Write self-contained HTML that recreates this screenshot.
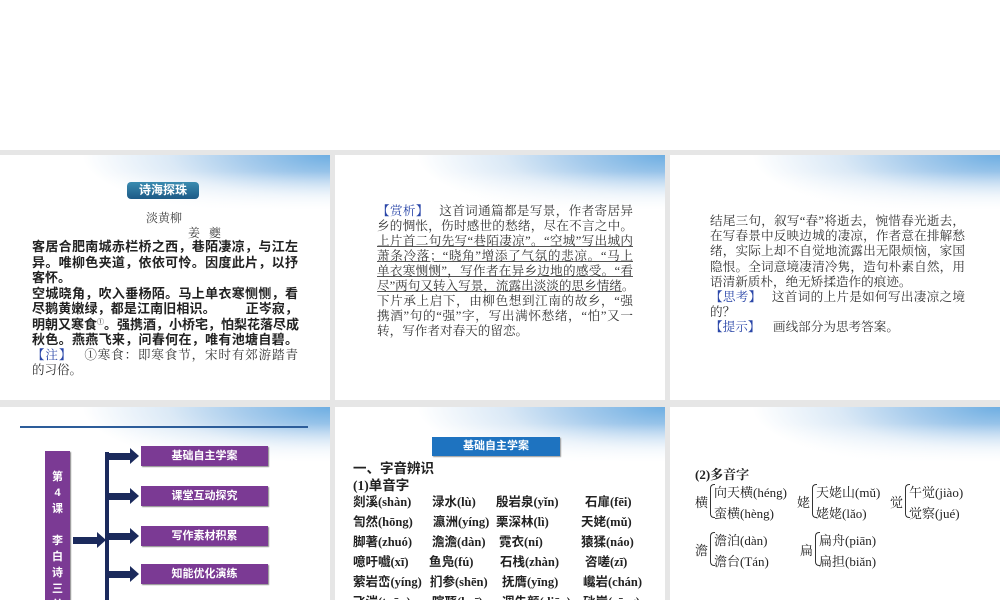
<!DOCTYPE html>
<html><head><meta charset="utf-8"><style>
*{margin:0;padding:0;box-sizing:border-box}
body{width:1000px;height:600px;background:#fff;position:relative;overflow:hidden;font-family:"Liberation Serif","Noto Serif CJK SC","Noto Sans CJK SC",serif;color:#222}
.bg{position:absolute;left:0;top:150px;width:1000px;height:450px;background:#e6e6e6}
.s{position:absolute;background:#fff;overflow:hidden}
.hd{position:absolute;left:0;top:0;width:100%;height:55px;background:linear-gradient(180deg,rgba(255,255,255,0) 0%,rgba(255,255,255,0) 30%,#fff 100%),radial-gradient(ellipse 75% 120% at 100% 0%,#6eaee2 0%,#a6cbec 35%,#dbe9f6 65%,rgba(255,255,255,0) 100%)}
.a{position:absolute;white-space:nowrap}
.bl{color:#2a46a8}
.u{text-decoration:underline;text-decoration-color:#555}
.L div{text-align:justify;text-align-last:justify;white-space:nowrap}
.L div.e{text-align-last:left}
.pb{position:absolute;background:#7b3a94;color:#fff;font-family:"Liberation Sans","Noto Sans CJK SC",sans-serif;font-weight:bold;font-size:11px;text-align:center;line-height:20px;box-shadow:1px 1px 1px #888}
.ar{position:absolute;height:7px;background:#1b2a5c}
.ar:after{content:"";position:absolute;right:-8px;top:-5px;border-left:9px solid #1b2a5c;border-top:8px solid transparent;border-bottom:8px solid transparent}
.p5{font-size:12.5px;font-weight:bold;font-family:"Liberation Serif","Noto Sans CJK SC",serif}
.p6{font-size:13px;font-family:"Liberation Serif","Noto Serif CJK SC",serif}
.br{position:absolute;width:5px;border:1px solid #333;border-right:none;border-radius:4px 0 0 4px}
.sp{font-size:7px;font-weight:normal;line-height:0;position:relative;top:-5px}
</style></head><body>
<div class="bg"></div>

<!-- slide 1 -->
<div class="s" style="left:0;top:155px;width:330px;height:245px">
<div class="hd"></div>
<div class="a" style="left:127px;top:27px;width:72px;height:17px;border-radius:4px;background:linear-gradient(#3a8bb0,#1d5a86);color:#fff;font-family:'Liberation Sans','Noto Sans CJK SC',sans-serif;font-weight:bold;font-size:12px;text-align:center;line-height:17px">诗海探珠</div>
<div class="a" style="left:146px;top:54px;font-size:12px;color:#444">淡黄柳</div>
<div class="a" style="left:188px;top:69px;font-size:12px;color:#444">姜&nbsp;&nbsp;&nbsp;夔</div>
<div class="a L" style="left:32px;top:84px;width:266px;font-size:13px;font-weight:bold;line-height:15.5px;font-family:'Liberation Sans','Noto Sans CJK SC',sans-serif">
<div>客居合肥南城赤栏桥之西，巷陌凄凉，与江左</div>
<div>异。唯柳色夹道，依依可怜。因度此片，以抒</div>
<div class="e">客怀。</div>
<div>空城晓角，吹入垂杨陌。马上单衣寒恻恻，看</div>
<div>尽鹅黄嫩绿，都是江南旧相识。&nbsp;&nbsp;&nbsp;&nbsp;&nbsp;&nbsp;&nbsp;&nbsp;正岑寂，</div>
<div>明朝又寒食<span class="sp">①</span>。强携酒，小桥宅，怕梨花落尽成</div>
<div>秋色。燕燕飞来，问春何在，唯有池塘自碧。</div>
</div>
<div class="a L" style="left:32px;top:193px;width:266px;font-size:12.5px;line-height:15px;color:#333">
<div><span class="bl">【注】</span>&nbsp;&nbsp;&nbsp;①寒食：即寒食节，宋时有郊游踏青</div>
<div class="e">的习俗。</div>
</div>
</div>

<!-- slide 2 -->
<div class="s" style="left:335px;top:155px;width:330px;height:245px">
<div class="hd"></div>
<div class="a L" style="left:42px;top:49px;width:256px;font-size:12.6px;line-height:15px;color:#333">
<div><span class="bl">【赏析】</span>&nbsp;&nbsp;&nbsp;这首词通篇都是写景，作者寄居异</div>
<div>乡的惆怅，伤时感世的愁绪，尽在不言之中。</div>
<div class="u">上片首二句先写“巷陌凄凉”。“空城”写出城内</div>
<div class="u">萧条冷落；“晓角”增添了气氛的悲凉。“马上</div>
<div class="u">单衣寒恻恻”，写作者在异乡边地的感受。“看</div>
<div><span class="u">尽”两句又转入写景，流露出淡淡的思乡情绪</span>。</div>
<div>下片承上启下，由柳色想到江南的故乡，“强</div>
<div>携酒”句的“强”字，写出满怀愁绪，“怕”又一</div>
<div class="e">转，写作者对春天的留恋。</div>
</div>
</div>

<!-- slide 3 -->
<div class="s" style="left:670px;top:155px;width:330px;height:245px">
<div class="hd"></div>
<div class="a L" style="left:40px;top:59px;width:255px;font-size:12.6px;line-height:15.2px;color:#333">
<div>结尾三句，叙写“春”将逝去，惋惜春光逝去，</div>
<div>在写春景中反映边城的凄凉，作者意在排解愁</div>
<div>绪，实际上却不自觉地流露出无限烦恼，家国</div>
<div>隐恨。全词意境凄清冷隽，造句朴素自然，用</div>
<div class="e">语清新质朴，绝无矫揉造作的痕迹。</div>
<div><span class="bl">【思考】</span>&nbsp;&nbsp;&nbsp;这首词的上片是如何写出凄凉之境</div>
<div class="e">的？</div>
<div class="e"><span class="bl">【提示】</span>&nbsp;&nbsp;&nbsp;&nbsp;画线部分为思考答案。</div>
</div>
</div>

<!-- slide 4 -->
<div class="s" style="left:0;top:407px;width:330px;height:193px">
<div class="hd"></div>
<div class="a" style="left:20px;top:19px;width:288px;height:2px;background:#2d5d9a"></div>
<div class="pb" style="left:45px;top:44px;width:25px;height:160px;line-height:16px;padding-top:18px;font-size:11px">第<br>4<br>课<br><br>李<br>白<br>诗<br>三<br>首</div>
<div class="ar" style="left:73px;top:130px;width:25px"></div>
<div class="a" style="left:105px;top:45px;width:4px;height:150px;background:#1b2a5c"></div>
<div class="ar" style="left:107px;top:46px;width:24px"></div>
<div class="ar" style="left:107px;top:86px;width:24px"></div>
<div class="ar" style="left:107px;top:126px;width:24px"></div>
<div class="ar" style="left:107px;top:164px;width:24px"></div>
<div class="pb" style="left:141px;top:39px;width:127px;height:20px">基础自主学案</div>
<div class="pb" style="left:141px;top:79px;width:127px;height:20px">课堂互动探究</div>
<div class="pb" style="left:141px;top:119px;width:127px;height:20px">写作素材积累</div>
<div class="pb" style="left:141px;top:157px;width:127px;height:20px">知能优化演练</div>
</div>

<!-- slide 5 -->
<div class="s" style="left:335px;top:407px;width:330px;height:193px">
<div class="hd"></div>
<div class="a" style="left:97px;top:30px;width:128px;height:19px;background:#1e73c0;color:#fff;font-family:'Liberation Sans','Noto Sans CJK SC',sans-serif;font-weight:bold;font-size:11px;text-align:center;line-height:19px;box-shadow:1px 1px 1px #999">基础自主学案</div>
<div class="a p5" style="left:18px;top:50px;font-size:13.5px">一、字音辨识</div>
<div class="a p5" style="left:18px;top:67px;font-size:13.5px">(1)单音字</div>
<div class="a p5" style="left:18px;top:84px">剡溪(shàn)</div><div class="a p5" style="left:97px;top:84px">渌水(lù)</div><div class="a p5" style="left:161px;top:84px">殷岩泉(yǐn)</div><div class="a p5" style="left:250px;top:84px">石扉(fēi)</div>
<div class="a p5" style="left:18px;top:104px">訇然(hōng)</div><div class="a p5" style="left:98px;top:104px">瀛洲(yíng)</div><div class="a p5" style="left:161px;top:104px">栗深林(lì)</div><div class="a p5" style="left:246px;top:104px">天姥(mǔ)</div>
<div class="a p5" style="left:18px;top:124px">脚著(zhuó)</div><div class="a p5" style="left:97px;top:124px">澹澹(dàn)</div><div class="a p5" style="left:164px;top:124px">霓衣(ní)</div><div class="a p5" style="left:246px;top:124px">猿猱(náo)</div>
<div class="a p5" style="left:18px;top:144px">噫吁嚱(xī)</div><div class="a p5" style="left:94px;top:144px">鱼凫(fú)</div><div class="a p5" style="left:165px;top:144px">石栈(zhàn)</div><div class="a p5" style="left:250px;top:144px">咨嗟(zī)</div>
<div class="a p5" style="left:18px;top:164px">萦岩峦(yíng)</div><div class="a p5" style="left:95px;top:164px">扪参(shēn)</div><div class="a p5" style="left:167px;top:164px">抚膺(yīng)</div><div class="a p5" style="left:248px;top:164px">巉岩(chán)</div>
<div class="a p5" style="left:18px;top:184px">飞湍(tuān)</div><div class="a p5" style="left:97px;top:184px">喧豗(huī)</div><div class="a p5" style="left:167px;top:184px">凋朱颜(diāo)</div><div class="a p5" style="left:248px;top:184px">砯崖(pīng)</div>
</div>

<!-- slide 6 -->
<div class="s" style="left:670px;top:407px;width:330px;height:193px">
<div class="hd"></div>
<div class="a p6" style="left:25px;top:57px;font-weight:bold">(2)多音字</div>
<div class="a p6" style="left:25px;top:85px">横</div><div class="br" style="left:40px;top:77px;height:34px"></div>
<div class="a p6" style="left:44px;top:75px">向天横(héng)</div><div class="a p6" style="left:44px;top:96px">蛮横(hèng)</div>
<div class="a p6" style="left:127px;top:85px">姥</div><div class="br" style="left:142px;top:77px;height:34px"></div>
<div class="a p6" style="left:146px;top:75px">天姥山(mǔ)</div><div class="a p6" style="left:146px;top:96px">姥姥(lǎo)</div>
<div class="a p6" style="left:220px;top:85px">觉</div><div class="br" style="left:235px;top:77px;height:34px"></div>
<div class="a p6" style="left:239px;top:75px">午觉(jiào)</div><div class="a p6" style="left:239px;top:96px">觉察(jué)</div>
<div class="a p6" style="left:25px;top:133px">澹</div><div class="br" style="left:40px;top:125px;height:34px"></div>
<div class="a p6" style="left:44px;top:123px">澹泊(dàn)</div><div class="a p6" style="left:44px;top:144px">澹台(Tán)</div>
<div class="a p6" style="left:130px;top:133px">扁</div><div class="br" style="left:145px;top:125px;height:34px"></div>
<div class="a p6" style="left:149px;top:123px">扁舟(piān)</div><div class="a p6" style="left:149px;top:144px">扁担(biǎn)</div>
</div>
</body></html>
